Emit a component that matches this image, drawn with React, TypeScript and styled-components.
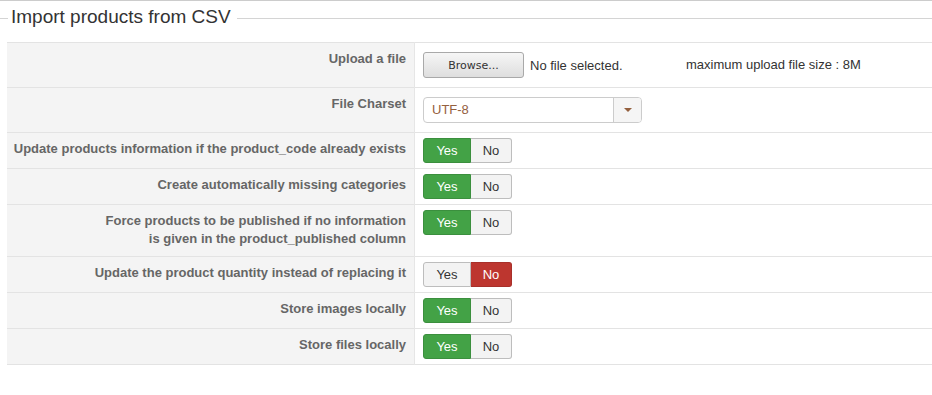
import React from 'react';
import styled, { createGlobalStyle } from 'styled-components';

const GlobalStyle = createGlobalStyle`
  html, body {
    margin: 0;
    padding: 0;
    background: #fff;
  }
  body {
    font-family: "Liberation Sans", Arial, Helvetica, sans-serif;
    font-size: 13px;
    color: #333;
  }
`;

const Page = styled.div`
  border-top: 1px solid #cccccc;
  width: 932px;
`;

// legend with a rule on both sides, like a fieldset without side borders
const Legend = styled.div`
  display: flex;
  align-items: center;
  margin-top: 6px;
  font-size: 19px;
  line-height: 20px;
  color: #333;

  &::before,
  &::after {
    content: '';
    height: 1px;
    background: #d4d4d4;
    margin-top: 2px;
  }
  &::before {
    width: 8px;
    margin-right: 3px;
  }
  &::after {
    flex: 1;
    margin-left: 6px;
  }
`;

const Table = styled.table`
  border-collapse: collapse;
  margin: 15px 0 0 7px;
  width: 925px;
  table-layout: fixed;
`;

const Row = styled.tr`
  border-top: 1px solid #e3e3e3;
  border-bottom: 1px solid #e3e3e3;
`;

const KeyCell = styled.td`
  width: 399px;
  padding: 7px 8px 5px 0;
  background: #f4f4f4;
  border-right: 1px solid #e6e6e6;
  text-align: right;
  vertical-align: top;
`;

const Label = styled.label`
  display: block;
  margin-bottom: 3px;
  font-weight: bold;
  font-size: 13px;
  line-height: 18px;
  color: #666;
`;

const ValueCell = styled.td`
  padding: 5px 8px;
  vertical-align: top;
`;

const FilePicker = styled.div`
  display: inline-flex;
  align-items: center;
  width: 263px;
  margin: 4px 0;
  vertical-align: top;
`;

const BrowseButton = styled.button`
  width: 101px;
  height: 26px;
  padding: 0;
  border: 1px solid #a9a9a9;
  border-radius: 3px;
  background: linear-gradient(#f6f6f6, #dedede);
  font-family: "DejaVu Sans", sans-serif;
  font-size: 11px;
  color: #333;
  margin-right: 6px;
`;

const FileName = styled.span`
  font-size: 13px;
  color: #333;
`;

const Hint = styled.span`
  display: inline-block;
  line-height: 34px;
  font-size: 13px;
  color: #333;
`;

const Select = styled.div`
  display: flex;
  width: 219px;
  height: 26px;
  margin: 4px 0;
  box-sizing: border-box;
  border: 1px solid #cccccc;
  border-radius: 4px;
  background: #fff;
  overflow: hidden;
`;

const SelectValue = styled.span`
  flex: 1;
  padding-left: 8px;
  line-height: 24px;
  font-size: 13px;
  color: #94603e;
`;

const SelectArrow = styled.span`
  width: 27px;
  display: flex;
  align-items: center;
  justify-content: center;
  border-left: 1px solid #cccccc;
  background: #f5f5f5;

  &::after {
    content: '';
    border-left: 4px solid transparent;
    border-right: 4px solid transparent;
    border-top: 4px solid #94603e;
  }
`;

const Toggle = styled.div`
  display: inline-flex;
  height: 25px;
`;

const ToggleButton = styled.span<{ $on: boolean; $tone: 'yes' | 'no'; $w: number }>`
  display: flex;
  align-items: center;
  justify-content: center;
  box-sizing: border-box;
  width: ${(p) => p.$w}px;
  font-size: 13px;
  border: 1px solid
    ${(p) => (!p.$on ? '#bdbdbd' : p.$tone === 'yes' ? '#3b8f3e' : '#a8302a')};
  background: ${(p) =>
    !p.$on ? '#f3f3f3' : p.$tone === 'yes' ? '#43a246' : '#bd362f'};
  color: ${(p) => (p.$on ? '#fff' : '#333')};

  &:first-child {
    border-radius: 3px 0 0 3px;
  }
  &:last-child {
    border-radius: 0 3px 3px 0;
    border-left: none;
  }
`;

function YesNo({ value }: { value: boolean }) {
  return (
    <Toggle>
      <ToggleButton $on={value} $tone="yes" $w={48}>
        Yes
      </ToggleButton>
      <ToggleButton $on={!value} $tone="no" $w={41}>
        No
      </ToggleButton>
    </Toggle>
  );
}

const options: { label: React.ReactNode; value: boolean }[] = [
  {
    label: 'Update products information if the product_code already exists',
    value: true,
  },
  { label: 'Create automatically missing categories', value: true },
  {
    label: (
      <>
        Force products to be published if no information
        <br />
        is given in the product_published column
      </>
    ),
    value: true,
  },
  { label: 'Update the product quantity instead of replacing it', value: false },
  { label: 'Store images locally', value: true },
  { label: 'Store files locally', value: true },
];

export default function App() {
  return (
    <Page>
      <GlobalStyle />
      <Legend>Import products from CSV</Legend>
      <Table>
        <tbody>
          <Row>
            <KeyCell>
              <Label>Upload a file</Label>
            </KeyCell>
            <ValueCell>
              <FilePicker>
                <BrowseButton>Browse...</BrowseButton>
                <FileName>No file selected.</FileName>
              </FilePicker>
              <Hint>maximum upload file size : 8M</Hint>
            </ValueCell>
          </Row>
          <Row>
            <KeyCell>
              <Label>File Charset</Label>
            </KeyCell>
            <ValueCell>
              <Select>
                <SelectValue>UTF-8</SelectValue>
                <SelectArrow />
              </Select>
            </ValueCell>
          </Row>
          {options.map((opt, i) => (
            <Row key={i}>
              <KeyCell>
                <Label>{opt.label}</Label>
              </KeyCell>
              <ValueCell>
                <YesNo value={opt.value} />
              </ValueCell>
            </Row>
          ))}
        </tbody>
      </Table>
    </Page>
  );
}
